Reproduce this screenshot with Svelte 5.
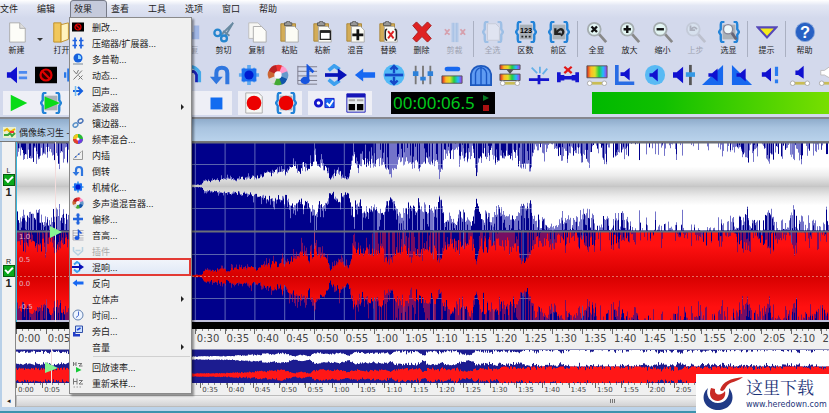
<script lang="ts">
	type Tool = { icon: string; label?: string; disabled?: boolean; arrow?: boolean };

	const menus = ['文件', '编辑', '效果', '查看', '工具', '选项', '窗口', '帮助'];
	let openMenu = $state('效果');
	let channels = $state([
		{ name: 'L', on: true },
		{ name: 'R', on: true }
	]);

	const speaker = '<path d="M2 9h5l7-6v18l-7-6H2z" fill="#1010d0"/>';
	const page = '<path d="M4 2h11l6 6v15H4z" fill="#fdfdf8" stroke="#aaa"/><path d="M15 2v6h6" fill="#ddd" stroke="#aaa"/>';
	const clip = '<path d="M2 3h16v19H2z" fill="#d3ac57" stroke="#a98538"/><path d="M6 5V2h2a2 2 0 0 1 4 0h2v3z" fill="#999" stroke="#555"/>';
	const sheet = '<path d="M7 6h10l4 4v13H7z" fill="#fbfbf4" stroke="#aaa"/>';
	const braces = '<path d="M7 1H5Q3 1 3 4v5l-2 3 2 3v5q0 3 2 3h2M17 1h2q2 0 2 3v5l2 3-2 3v5q0 3-2 3h-2" fill="none" stroke="#2484d8" stroke-width="2.6"/>';
	const greyBox = '<path d="M5 4h14v16H5z" fill="#a9b1b8"/>';
	const lens = '<path d="m14 14 8 9" stroke="#888" stroke-width="3"/><circle cx="9" cy="9" r="7" fill="#e2f5f3" stroke="#a5adb0" stroke-width="2"/>';
	const nodes = '<path d="M4 21h16" stroke="#c9bd55" stroke-width="3"/><circle cx="4" cy="21" r="2.5" fill="#fff" stroke="#aaa"/><circle cx="20" cy="21" r="2.5" fill="#fff" stroke="#aaa"/>';
	const wheel = ['#e33', '#f9c', '#69c', '#15a', '#4a3', '#ddd', '#c63', '#b22']
		.map((c, i) => `<path d="M12 12 8 2q6-3 10 1z" fill="${c}" transform="rotate(${i * 45} 12 12)"/>`)
		.join('');

	const icons: Record<string, string> = {
		page,
		open: '<path d="M3 2h8v21H3z" fill="#f1c75c" stroke="#bd8c24"/><path d="m11 4 8-2v18l-8 3z" fill="#fff3be" stroke="#bd8c24"/>',
		save: '<path d="M2 2h20v20H2z" fill="#3a68c8"/><path d="M6 2h12v8H6z" fill="#fff"/>',
		undo: '<path d="M3 3h18v18H3z" fill="#7898d8"/>',
		redo: '<path d="M6 20V8h5v4h4V5h6v15z" fill="#2c68d8"/>',
		scissors: '<path d="m9 15 13-13-9 15M11 11 18 16" fill="none" stroke="#688aa2" stroke-width="2"/><circle cx="5" cy="13" r="3.5" fill="none" stroke="#2686cf" stroke-width="2.5"/><circle cx="12" cy="19" r="3.2" fill="none" stroke="#2686cf" stroke-width="2.5"/>',
		copy: '<path d="M3 2h10l4 4v13H3z" fill="#f7f7f4" stroke="#bbb"/><path d="M8 6h9l5 5v12H8z" fill="#fcfcf8" stroke="#aaa"/>',
		paste: clip + sheet,
		pasteNew: clip + sheet + '<path d="M9 11h11v9H9z" fill="#fff" stroke="#222" stroke-width="1.5"/><path d="M9 10h11v3H9z" fill="#222"/>',
		mix: clip + sheet + '<path d="M14 9v12M8 15h12" stroke="#111" stroke-width="3"/>',
		replace: clip + sheet + '<path d="m11 11 6 8m0-8-6 8" stroke="#d22" stroke-width="2"/><path d="M10 9q-2 0-2 3v6q0 3 2 3m8-12q2 0 2 3v6q0 3-2 3" fill="none" stroke="#222" stroke-width="1.5"/>',
		remove: '<path d="m2 5 4-4 6 6 6-6 4 4-6 7 6 7-4 4-6-6-6 6-4-4 6-7z" fill="#df2222" stroke="#a51616"/>',
		trim: '<path d="M8 2h8v21H8z" fill="#87b7e6"/><path d="M10 2v21m4-21v21" stroke="#2e7fd0"/><path d="M1 9l5 6m0-6-5 6M18 9l5 6m0-6-5 6" stroke="#d22" stroke-width="2"/>',
		selectAll: braces + '<path d="M6 3h9l4 4v14H6z" fill="#fff" stroke="#aaa"/>',
		number: greyBox + braces + '<text x="12" y="13" font-size="8" font-weight="bold" text-anchor="middle" font-family="Liberation Sans">123</text><path d="M7 17h2m2 0h2m2 0h2" stroke="#222" stroke-width="2"/>',
		previous: greyBox + braces + '<path d="M8 8v6h6M9 13q4-6 7-3 2 3-2 6" fill="none" stroke="#222" stroke-width="2.5"/>',
		zoomAll: lens + '<path d="m6 6 6 6m0-6-6 6" stroke="#111" stroke-width="2.6"/>',
		zoomIn: lens + '<path d="M5 9h8M9 5v8" stroke="#111" stroke-width="2.6"/>',
		zoomOut: lens + '<path d="M5 9h8" stroke="#111" stroke-width="2.6"/>',
		zoomPrevious: lens + '<path d="M6 5v5h5M7 9q3-4 6 0" fill="none" stroke="#555" stroke-width="2"/>',
		zoomSel: greyBox + braces + '<path d="m15 13 5 7" stroke="#667" stroke-width="3"/><circle cx="11" cy="9" r="5" fill="#eef8fa" stroke="#889" stroke-width="1.5"/>',
		tip: '<path d="M2 7h20L12 18z" fill="#f5ec18" stroke="#5548b8" stroke-width="2.3"/>',
		help: '<circle cx="12" cy="12" r="10.5" fill="#2861c4" stroke="#8daadb"/><text x="12" y="18" font-size="18" font-weight="bold" text-anchor="middle" fill="#fff" font-family="Liberation Sans">?</text>',
		match: '<path d="M1 9h4l7-6v18l-7-6H1z" fill="#1010d0"/><path d="M14 9h9m-9 6h9" stroke="#4c8af0" stroke-width="3"/>',
		censor: '<path d="M0 3h24v18H0z"/><circle cx="12" cy="12" r="6" fill="#300" stroke="#e00000" stroke-width="2.4"/><path d="m8 8 8 8" stroke="#e00000" stroke-width="2.4"/>',
		compress: '<path d="M6 1v22M18 1v22M1 7h9m4 0h9M1 17h9m4 0h9" stroke="#1f62e0" stroke-width="3.4"/>',
		doppler: '<circle cx="12" cy="10" r="9" fill="#1560dd"/><path d="M12 4a6 6 0 0 1 6 8h-6z" fill="#8fd6ff"/><path d="M2 22h20" stroke="#789" stroke-width="2"/>',
		dynamics: '<path d="M3 21 20 3M3 3l6 7 4-8M13 13l8 8m0-8-8 8" fill="none" stroke="#777" stroke-width="2"/>',
		echo: '<path d="M2 12h17M12 4l8 8-8 8" fill="none" stroke="#1560df" stroke-width="4"/><path d="M7 2v20" stroke="#71b9ee" stroke-width="3"/>',
		flanger: '<ellipse cx="7" cy="16" rx="5" ry="4" fill="none" stroke="#5b91c8" stroke-width="3" transform="rotate(-35 7 16)"/><ellipse cx="17" cy="8" rx="5" ry="4" fill="none" stroke="#4b74b8" stroke-width="3" transform="rotate(-35 17 8)"/>',
		bands: '<circle cx="12" cy="12" r="10" fill="#28bb35"/><path d="M12 2A10 10 0 0 0 2 12h10z" fill="#f0c620"/><path d="M12 12v10a10 10 0 0 1-10-10z" fill="#e63b31"/><path d="M12 12h10a10 10 0 0 1-10 10z" fill="#713ce0"/><circle cx="12" cy="12" r="3" fill="#fff"/>',
		interpolate: '<path d="M2 21h19V3M3 19 19 5" fill="none" stroke="#999" stroke-width="2"/><path d="M6 14h3v3H6zm6-5h3v3h-3z" fill="#36c"/>',
		invert: '<path d="M8 18V10Q8 4 14 4t6 6v12" fill="none" stroke="#2f76df" stroke-width="4.4"/><path d="M1 14h14l-7 8z" fill="#2f76df"/>',
		mechanize: '<path d="M12 1v22M1 12h22M5 5l14 14m0-14L5 19" stroke="#60a9ef" stroke-width="4"/><path d="M4 5h16v14H4z" fill="#1c70ef"/><circle cx="12" cy="12" r="5" fill="#001bd0"/>',
		wheel: wheel + '<circle cx="12" cy="12" r="4" fill="#f8f8ff"/>',
		offset: '<path d="M12 1v22M2 12h20" stroke="#2365dc" stroke-width="5"/><path d="m7 5 5-4 5 4M7 19l5 4 5-4" fill="#2365dc"/>',
		pitch: '<path d="M2 2v20M2 3h21M2 8h21M2 13h21M2 18h21M2 22h21" stroke="#778" stroke-width="1"/><path d="M13 18V3l6 6" fill="none" stroke="#1755df" stroke-width="3"/><ellipse cx="10" cy="18" rx="5" ry="4" fill="#1755df"/>',
		plugin: '<path d="M3 4v8l9 8 9-8V4M7 11h10" fill="none" stroke="#a9cbe0" stroke-width="3"/>',
		reverb: '<path d="M4 7 10 2l6 4M4 17l6 5 6-4" fill="none" stroke="#3da0ef" stroke-width="4"/><path d="M0 12h20" stroke="#0710b8" stroke-width="4"/><path d="m14 5 10 7-10 7z" fill="#0710b8"/>',
		back: '<path d="m1 12 9-7v4h13v6H10v4z" fill="#1768f2"/>',
		stereo: '<circle cx="12" cy="12" r="11.5" fill="#52baf7"/><path d="M2 12h20" stroke="#1448c8" stroke-width="3"/><path d="M12 2v8m0 4v8M8 6l4-4 4 4M8 18l4 4 4-4" fill="none" stroke="#1448c8" stroke-width="2.6"/>',
		clock: '<circle cx="12" cy="12" r="10" fill="#edf4ff" stroke="#6281b0" stroke-width="2"/><path d="M13 5v8l-5 4" fill="none" stroke="#46c" stroke-width="2"/>',
		voice: '<path d="M7 2h14v13H7z" fill="#cee3ff" stroke="#3250a8" stroke-width="2"/><path d="M2 14h5v4h9v5H2z" fill="#213dc7"/><path d="m10 10 7-4" stroke="#2145d5" stroke-width="3"/>',
		rate: '<path d="M3 2v8m0-4h5m0-4v8M12 5h8l-6 5h7" fill="none" stroke="#777" stroke-width="2"/><path d="m8 12 11 6-11 5z" fill="#12c934"/>',
		resample: '<path d="M3 3v12m0-6h7m0-6v12m4-8h7l-7 7h8" fill="none" stroke="#777" stroke-width="2"/><path d="M3 20h18" stroke="#999" stroke-width="2" stroke-dasharray="3"/>',
		wave: '<path d="M1 9v6m4-10v14M9 2v20m4-16v12m4-15v18m4-13v8" stroke="#2877e8" stroke-width="3"/>',
		arch: '<path d="M3 20V9q9-12 18 0v11" fill="none" stroke="#45a9e9" stroke-width="4"/><path d="M9 12q6-8 9 0v8" fill="none" stroke="#1521b4" stroke-width="3"/>',
		sliders: '<path d="M4 2v20m8-20v20m8-20v20" stroke="#777" stroke-width="2"/><path d="M1 8h6v5H1zm8 6h6v4H9zm8-6h6v5h-6z" fill="#2d80d9"/>',
		equal: '<rect x="4" y="3" width="17" height="5" rx="3" fill="#1768ef"/><path d="M1 13h22v8H1z" fill="url(#spectrum)" stroke="#555"/>',
		gate: '<path d="M1 23V11q2-9 11-9t11 9v12z" fill="#5f9bf2" stroke="#1e59bd" stroke-width="2"/><path d="M6 23V10q1-5 6-6 5 1 6 6v13M12 3v20" fill="none" stroke="#1a57c4" stroke-width="1.5"/>',
		stack: '<path d="M1 1h22v5H1zm0 10h22v7H1z" fill="url(#spectrum)" stroke="#555"/><path d="M8 6h8l-4 5z" fill="#555"/>' + nodes,
		pop: '<path d="M1 17h22M12 12v10" stroke="#1515cd" stroke-width="3"/><path d="m10 10-6-6m9 6V3m3 8 5-6" stroke="#65b0e8" stroke-width="2"/>',
		noise: '<path d="M2 9v11m4-8v6m0-3h12m0-3v6m4-9v11" stroke="#1515d0" stroke-width="4"/><path d="m8 3 8 7m0-7-8 7" stroke="#e01818" stroke-width="2.5"/>',
		spectrum: '<path d="M1 2h22v13H1z" fill="url(#spectrum)" stroke="#555"/>' + nodes,
		volAxis: '<path d="M2 1v20h19" fill="none" stroke="#286ce4" stroke-width="4"/><path d="M6 9h4l6-5v14l-6-5H6z" fill="#1010d0"/>',
		volCircle: '<circle cx="12" cy="12" r="11" fill="#58baf4"/><path d="M6 10h3l6-5v14l-6-5H6z" fill="#1010d0"/>',
		volSlider: '<path d="M0 9h4l7-6v18l-7-6H0z" fill="#1010d0"/><path d="M19 1v22" stroke="#555" stroke-width="3"/><path d="M14 9h10v5H14z" fill="#3398e5"/>',
		fadeIn: '<path d="M0 23 23 1v22z" fill="#1768ef"/><path d="M7 10h4l6-5v14l-6-5H7z" fill="#1010d0"/>',
		fadeOut: '<path d="M1 1v22h22z" fill="#1768ef"/><path d="M6 10h4l6-5v14l-6-5H6z" fill="#1010d0"/>',
		volMax: '<path d="M2 9h4l6-5v15l-6-5H2z" fill="#1010d0"/><path d="M18 3v10m0 4v4" stroke="#287bf0" stroke-width="3.5"/>',
		volShape: '<path d="M7 7h3l6-5v14l-6-4H7z" fill="#1010d0"/>' + nodes,
		volPale: '<path d="M3 7h4l7-5v14l-7-4H3z" fill="#fff" stroke="#bbb"/>' + nodes,
		play: '<path d="M3 3v18l18-9z" fill="#08db18"/>',
		playSel: greyBox + braces + '<path d="M5 5v14l17-7z" fill="#08db18"/>',
		stop: '<path d="M6 6h13v13H6z" fill="#126cf0"/>',
		record: '<path d="M3 1h14l4 4v18H3z" fill="#f7f7f4" stroke="#aaa"/><circle cx="12" cy="12" r="8" fill="#ec0000"/>',
		recordSel: greyBox + braces + '<circle cx="12" cy="12" r="8" fill="#ec0000"/>',
		options: '<circle cx="6" cy="12" r="3.5" fill="#fff" stroke="#1616cc" stroke-width="3"/><path d="M13 7h10v10H13z" fill="#1768ef" stroke="#1616cc"/><path d="m15 12 3 3 4-6" fill="none" stroke="#fff" stroke-width="2"/>',
		panel: '<path d="M2 2h20v20H2z" fill="#e8edf0" stroke="#1616b8"/><path d="M2 2h20v4H2z" fill="#1616b8"/><path d="M4 13h7v7H4zm9 0h7v7h-7z"/><path d="M4 9h7m2 0h7" stroke="#aaa" stroke-width="2"/>'
	};

	const effects: (Tool | null)[] = [
		{ icon: 'censor', label: '删改...' },
		{ icon: 'compress', label: '压缩器/扩展器...' },
		{ icon: 'doppler', label: '多普勒...' },
		{ icon: 'dynamics', label: '动态...' },
		{ icon: 'echo', label: '回声...' },
		{ icon: '', label: '滤波器', arrow: true },
		{ icon: 'flanger', label: '镶边器...' },
		{ icon: 'bands', label: '频率混合...' },
		{ icon: 'interpolate', label: '内插' },
		{ icon: 'invert', label: '倒转' },
		{ icon: 'mechanize', label: '机械化...' },
		{ icon: 'wheel', label: '多声道混音器...' },
		{ icon: 'offset', label: '偏移...' },
		{ icon: 'pitch', label: '音高...' },
		{ icon: 'plugin', label: '插件', disabled: true },
		{ icon: 'reverb', label: '混响...' },
		{ icon: 'back', label: '反向' },
		{ icon: '', label: '立体声', arrow: true },
		{ icon: 'clock', label: '时间...' },
		{ icon: 'voice', label: '旁白...' },
		{ icon: '', label: '音量', arrow: true },
		null,
		{ icon: 'rate', label: '回放速率...' },
		{ icon: 'resample', label: '重新采样...' }
	];

	const fileTools: Tool[] = [
		{ icon: 'open', label: '打开' },
		{ icon: 'save', label: '保存' }
	];
	const editTools: Tool[][] = [
		[
			{ icon: 'undo', label: '撤消' },
			{ icon: 'redo', label: '重复', disabled: true },
			{ icon: 'scissors', label: '剪切' },
			{ icon: 'copy', label: '复制' },
			{ icon: 'paste', label: '粘贴' },
			{ icon: 'pasteNew', label: '粘新' },
			{ icon: 'mix', label: '混音' },
			{ icon: 'replace', label: '替换' },
			{ icon: 'remove', label: '删除' },
			{ icon: 'trim', label: '剪裁', disabled: true }
		],
		[
			{ icon: 'selectAll', label: '全选', disabled: true },
			{ icon: 'number', label: '区数' },
			{ icon: 'previous', label: '前区' }
		],
		[
			{ icon: 'zoomAll', label: '全显' },
			{ icon: 'zoomIn', label: '放大' },
			{ icon: 'zoomOut', label: '缩小' },
			{ icon: 'zoomPrevious', label: '上步', disabled: true },
			{ icon: 'zoomSel', label: '选显' }
		],
		[{ icon: 'tip', label: '提示' }],
		[{ icon: 'help', label: '帮助' }]
	];
	const effectTools = [
		'match', 'censor', 'wave', 'doppler', 'dynamics', 'echo', 'arch', 'invert', 'mechanize', 'wheel',
		'pitch', 'reverb', 'back', 'stereo', 'sliders', 'equal', 'gate', 'stack', 'pop', 'noise',
		'spectrum', 'volAxis', 'volCircle', 'volSlider', 'fadeIn', 'fadeOut', 'volMax', 'volShape', 'volPale'
	];

	// [position, level] pairs, linearly interpolated
	const envelope = [
		[0, 0.85], [54, 0.9], [80, 0.4], [130, 0.02], [185, 0.02], [188, 0.13], [220, 0.19], [240, 0.23],
		[262, 0.38], [285, 0.56], [292, 0.5], [299, 0.7], [310, 0.42], [314, 0.16], [322, 0.42], [332, 0.18],
		[337, 0.72], [358, 0.6], [365, 0.7], [375, 0.4], [384, 0.75], [400, 0.6], [420, 0.7], [423, 0.35],
		[428, 0.85], [456, 0.92], [460, 0.35], [465, 0.85], [500, 0.95], [504, 0.5], [514, 0.5], [518, 0.95],
		[545, 1], [560, 1.05], [570, 0.85], [580, 1.15], [608, 1.05], [630, 1.2], [660, 1.25], [700, 1.3], [722, 1.05],
		[731, 0.75], [735, 1.1], [746, 1.1], [752, 0.75], [757, 1.1], [773, 1.1], [776, 0.85], [780, 1.15], [813, 1.1], [960, 1.3]
	];

	function level(x: number) {
		const i = Math.max(1, envelope.findIndex((p) => p[0] >= x));
		const [x0, y0] = envelope[i - 1];
		const [x1, y1] = envelope[i];
		return y0 + ((y1 - y0) * (x - x0)) / (x1 - x0);
	}

	function trace(mid: number, half: number, seed: number, scale: number) {
		let s = seed;
		const rnd = () => (s = (s * 16807) % 2147483647) / 2147483647;
		let body = '';
		let peaks = '';
		let sway = 0.5;
		for (let x = 0; x < 813; x++) {
			const env = level(x * scale);
			const dense = x * scale > 358 || x < 54;
			// the level drifts over a few columns, each side adds its own jitter
			if (rnd() > 0.45) sway = rnd();
			const side = () => {
				const b = Math.min(1, env * (1 - 0.32 * sway * sway - 0.3 * rnd() ** 2));
				const p = Math.min(1, dense && rnd() > 0.6 ? 1 : b * (1 + rnd() ** 2 * 0.7));
				return [b * half, p * half];
			};
			const [up, upPeak] = side();
			const [down, downPeak] = side();
			body += `M${x + 0.5} ${(mid - up - 0.5).toFixed(1)}V${(mid + down + 0.5).toFixed(1)}`;
			peaks += `M${x + 0.5} ${(mid - upPeak).toFixed(1)}V${(mid + downPeak).toFixed(1)}`;
		}
		return { body, peaks };
	}

	const left = trace(44, 44, 4211, 1);
	const right = trace(134, 44, 9173, 1);
	const leftSmall = trace(9, 8, 771, 1.132);
	const rightSmall = trace(26, 8, 3301, 1.132);

	const stamp = (i: number) => `${Math.floor(i / 12)}:${String((i % 12) * 5).padStart(2, '0')}`;
	const marks = Array.from({ length: 28 }, (_, i) => stamp(i));
	const smallMarks = Array.from({ length: 26 }, (_, i) => stamp(i));
</script>

{#snippet glyph(name: string)}
	<svg class="glyph" viewBox="0 0 24 24" aria-hidden="true">{@html icons[name] ?? ''}</svg>
{/snippet}

{#snippet tool(t: Tool)}
	<button class="tool" disabled={t.disabled}>
		{@render glyph(t.icon)}
		<span>{t.label}</span>
	</button>
{/snippet}

<div class="app">
	<nav class="menubar">
		{#each menus as m}
			<button class:active={openMenu === m} onclick={() => (openMenu = m)}>{m}</button>
		{/each}
	</nav>

	<div class="toolbar main-tools">
		{@render tool({ icon: 'page', label: '新建' })}
		<button class="drop" aria-label="新建选项"></button>
		{#each fileTools as t}
			{@render tool(t)}
		{/each}
		{#each editTools as group}
			<div class="group">
				{#each group as t}
					{@render tool(t)}
				{/each}
			</div>
		{/each}
	</div>

	<div class="toolbar effect-tools">
		{#each effectTools as name}
			<button class="small-tool" aria-label={name}>{@render glyph(name)}</button>
		{/each}
	</div>

	<div class="toolbar controls">
		<div class="panel transport">
			<button aria-label="play">{@render glyph('play')}</button>
			<button aria-label="play selection">{@render glyph('playSel')}</button>
			<button class="last" aria-label="stop">{@render glyph('stop')}</button>
		</div>
		<div class="panel">
			<button aria-label="record">{@render glyph('record')}</button>
			<button aria-label="record selection">{@render glyph('recordSel')}</button>
		</div>
		<div class="panel">
			<button aria-label="control options">{@render glyph('options')}</button>
			<button aria-label="visuals">{@render glyph('panel')}</button>
		</div>
		<div class="timer">
			<span>00:00:06.5</span>
			<svg viewBox="0 0 8 18" aria-hidden="true"><path d="M1 1v6l6-3z" fill="#087b22" /><path d="M1 11h6v6H1z" fill="#a11" /></svg>
		</div>
		<div class="meter"></div>
	</div>

	<header class="title">
		<svg viewBox="0 0 13 11" aria-hidden="true">
			<path d="M0 0h13v11H0z" fill="#e9efcf" /><path d="m1 4 3-2 3 3 5-3" fill="none" stroke="#e9b800" stroke-width="2" /><path d="M1 8h4l2-2 2 3 3-3" fill="none" stroke="#3aa63c" stroke-width="2" /><path d="M7 5h4" stroke="#e33" stroke-width="2" />
		</svg>
		偶像练习生 -
	</header>

	<main class="editor">
		<aside class="gutter">
			{#each channels as c, i}
				<div class="channel">
					<label for="channel-{i}">{c.name}</label>
					<input id="channel-{i}" type="checkbox" bind:checked={c.on} />
					<b>1</b>
				</div>
			{/each}
			<button class="scroll-left" aria-label="scroll left">◂</button>
		</aside>

		<div class="tracks">
			<div class="wave-box">
				<svg class="wave" viewBox="0 0 813 180" preserveAspectRatio="none" aria-hidden="true">
					<defs>
						<linearGradient id="spectrum">
							<stop offset="0" stop-color="#d22" /><stop offset=".2" stop-color="#fb2" /><stop offset=".4" stop-color="#dfdf28" /><stop offset=".6" stop-color="#2c4" /><stop offset=".8" stop-color="#2bf" /><stop offset="1" stop-color="#a3e" />
						</linearGradient>
						<linearGradient id="white" gradientUnits="userSpaceOnUse" x1="0" x2="0" y1="0" y2="88">
							<stop offset=".28" stop-color="#fff" /><stop offset=".38" stop-color="#ececec" /><stop offset=".5" stop-color="#c8c8c8" /><stop offset=".62" stop-color="#ececec" /><stop offset=".72" stop-color="#fff" />
						</linearGradient>
						<linearGradient id="red" gradientUnits="userSpaceOnUse" x1="0" x2="0" y1="90" y2="178">
							<stop offset=".15" stop-color="#ff1010" /><stop offset=".5" stop-color="#d60000" /><stop offset=".85" stop-color="#ff1010" />
						</linearGradient>
						<pattern id="grid" width="29.8" height="180" patternUnits="userSpaceOnUse">
							<path d="M.5 0v180" stroke="#8e99cf" stroke-opacity=".65" />
						</pattern>
					</defs>
					<rect width="813" height="180" fill="#00008b" />
					<rect width="813" height="180" fill="url(#grid)" />
					<path d="M0 22.5h813M0 66.5h813M0 112.5h813M0 156.5h813" stroke="#5963ac" />
					<path d={left.peaks} stroke="#bfc0f4" stroke-opacity=".6" />
					<path d={left.body} stroke="url(#white)" />
					<path d={right.peaks} stroke="#ee1c3b" stroke-opacity=".5" />
					<path d={right.body} stroke="url(#red)" />
					<path d="M0 44.5h813" stroke="#c6c6c6" />
					<path d="M0 134.5h813" stroke="#e66c60" stroke-dasharray="2 2" />
					<path d="M0 .5h813M0 89.5h813" stroke="#6b6f78" stroke-width="2" />
					<path d="M0 179h813" stroke="#c2c2dc" stroke-width="2" />
					<path d="M.5 0v180" stroke="#35b6dc" />
					<path d="M39.5 0v180" stroke="#f2dcdc" />
					<path d="M34 84v12l12-6z" fill="#86f592" />
				</svg>
				<div class="levels"><span>1.0</span><span>0.5</span><span>0.0</span><span>-0.5</span></div>
			</div>
			<div class="black"></div>
			<div class="ruler">
				{#each marks as m}
					<span>{m}</span>
				{/each}
			</div>
			<svg class="overview" viewBox="0 0 813 34" preserveAspectRatio="none" aria-hidden="true">
				<rect width="813" height="34" fill="#1c1c90" />
				<path d={leftSmall.body} stroke="#fff" />
				<path d={rightSmall.body} stroke="#ff1717" />
				<path d="M0 .5h813" stroke="#8b8fb8" />
				<path d="M35.5 0v34" stroke="#f2dcdc" />
				<path d="M29 13v11l13-5z" fill="#86f592" />
			</svg>
			<div class="ruler small">
				{#each smallMarks as m}
					<span>{m}</span>
				{/each}
			</div>
			<div class="scrollbar"><i></i></div>
		</div>
	</main>
	<footer></footer>

	{#if openMenu === '效果'}
		<div class="menu" role="menu">
			{#each effects as e}
				{#if e}
					<button class="item" class:hot={e.label === '混响...'} role="menuitem" disabled={e.disabled}>
						{@render glyph(e.icon)}
						<span>{e.label}</span>
						{#if e.arrow}<i class="more"></i>{/if}
					</button>
				{:else}
					<hr />
				{/if}
			{/each}
		</div>
	{/if}

	<div class="badge">
		<svg viewBox="0 0 50 40" aria-hidden="true">
			<path d="M12 14C4 21 7 34 20 36c15 1 21-12 13-22 1 9-4 15-11 15-8 0-13-8-10-15z" fill="#203a86" />
			<path d="M15 14c-3 8 1 13 7 13 6-1 8-5 7-10-3 5-11 5-10-2z" fill="#c82a24" />
			<path d="M24 16C27 7 34 5 47 3 42 8 34 7 30 13c-2 4-4 5-6 3z" fill="#c82a24" />
		</svg>
		<div>
			<strong>这里下载</strong>
			<a href="http://www.heredown.com">www.heredown.com</a>
		</div>
	</div>
</div>

<style>
	:global(body) {
		overflow: hidden;
	}

	.app {
		position: relative;
		font-family: "Liberation Sans", "Noto Sans CJK SC", sans-serif;
		font-size: 9px;
		color: #222;
		background: #d3d9ec;
		overflow: hidden;
	}

	button {
		padding: 0;
		border: none;
		background: none;
		font: inherit;
		color: inherit;
	}

	.glyph {
		display: block;
		flex: none;
		width: 22px;
		height: 22px;
	}

	.menubar {
		display: flex;
		height: 18px;
		margin-left: -4px;
		background: linear-gradient(#fff, #e3e7f4 30%, #d3d9ec);
	}

	.menubar button {
		width: 37px;
		padding-left: 3px;
		border: 1px solid transparent;
		text-align: left;
		line-height: 16px;
	}

	.menubar button.active {
		border-color: #777b88;
		border-radius: 3px 3px 0 0;
		background: #c5cadb;
	}

	.toolbar {
		display: flex;
		align-items: center;
	}

	.main-tools {
		height: 42px;
	}

	.tool {
		display: flex;
		flex-direction: column;
		align-items: center;
		gap: 2px;
		flex: none;
		width: 33px;
		font-size: 8px;
		line-height: 12px;
	}

	.tool:disabled {
		opacity: 0.3;
	}

	.drop {
		width: 12px;
		height: 20px;
	}

	.drop::before {
		content: '';
		display: block;
		width: 0;
		margin-left: 4px;
		border: 3px solid transparent;
		border-top-color: #333;
		border-bottom: 0;
	}

	.group {
		display: flex;
	}

	.group:nth-of-type(1) {
		margin-left: 30px;
	}

	.group + .group {
		margin-left: 2px;
		padding-left: 2px;
		border-left: 1px solid #aab0c2;
	}

	.effect-tools {
		height: 29px;
		padding-left: 2px;
	}

	.small-tool {
		display: flex;
		justify-content: center;
		flex: none;
		width: 29px;
	}

	.controls {
		height: 28px;
		border-bottom: 2px solid #85878e;
	}

	.panel {
		display: flex;
		align-items: center;
		height: 24px;
		margin-right: 6px;
		background: #eeeff6;
	}

	.panel button {
		display: flex;
		justify-content: center;
		width: 32px;
	}

	.transport {
		width: 229px;
		margin-left: 3px;
	}

	.panel .last {
		margin-left: auto;
	}

	.timer {
		display: flex;
		align-items: center;
		justify-content: space-between;
		height: 22px;
		width: 104px;
		margin-left: 13px;
		padding: 0 5px 0 2px;
		box-sizing: border-box;
		background: #000;
		color: #00c81c;
		font: 17px/22px "Noto Sans", sans-serif;
	}

	.timer svg {
		width: 8px;
		height: 18px;
	}

	.meter {
		flex: 1;
		height: 22px;
		margin-left: 97px;
		background: linear-gradient(90deg, #00b900, #10c000 30%, #78df00);
	}

	.title {
		display: flex;
		align-items: center;
		gap: 3px;
		height: 17px;
		padding: 5px 0 0 3px;
		background: linear-gradient(#8faccb, #a9c4e0 40%, #b9d2eb);
	}

	.title svg {
		width: 13px;
		height: 11px;
	}

	.editor {
		display: flex;
		border-top: 1px solid #777;
	}

	.gutter {
		display: flex;
		flex-direction: column;
		flex: none;
		width: 13px;
		border-left: 2px solid #b8d0e8;
		border-right: 1px solid #888;
		background: #f2f2f2;
	}

	.channel {
		display: flex;
		flex-direction: column;
		align-items: center;
		height: 65px;
		padding-top: 26px;
	}

	.channel label {
		font-size: 7px;
		line-height: 6px;
	}

	.channel input {
		appearance: none;
		width: 12px;
		height: 12px;
		margin: 0;
		border: 1px solid #075c10;
		background: #0aa81b;
	}

	.channel input:checked::after {
		content: '';
		display: block;
		width: 6px;
		height: 3px;
		margin: 1px;
		border: solid #fff;
		border-width: 0 0 2px 2px;
		transform: rotate(-45deg);
	}

	.channel b {
		font-size: 11px;
		line-height: 13px;
	}

	.scroll-left {
		height: 12px;
		margin-top: auto;
		line-height: 10px;
		font-size: 7px;
	}

	.tracks {
		flex: 1;
		min-width: 0;
	}

	.wave-box {
		display: grid;
	}

	.wave,
	.levels {
		grid-area: 1 / 1;
	}

	.wave {
		display: block;
		width: 100%;
		height: 180px;
	}

	.levels {
		display: flex;
		flex-direction: column;
		justify-content: space-between;
		padding: 90px 0 10px 3px;
		color: #e5b3c4;
		font: 7px/10px "DejaVu Sans", sans-serif;
	}

	.black {
		height: 7px;
		background: #000;
	}

	.ruler {
		--steps: 27.28;
		display: flex;
		height: 20px;
		overflow: hidden;
		background: repeating-linear-gradient(90deg, #888 0 1px, transparent 1px 6px) 0 0 / 100% 2px no-repeat, #f0f0f0;
		font: 10px/19px "DejaVu Sans", sans-serif;
		color: #444;
	}

	.ruler span {
		flex: 0 0 calc(100% / var(--steps));
		padding-left: 1px;
		border-left: 1px solid #666;
		box-sizing: border-box;
		height: 5px;
		white-space: nowrap;
	}

	.overview {
		display: block;
		width: 100%;
		height: 34px;
	}

	.ruler.small {
		--steps: 30.88;
		height: 12px;
		font-size: 7px;
		line-height: 15px;
	}

	.scrollbar {
		display: flex;
		justify-content: center;
		align-items: center;
		height: 10px;
		padding-left: 380px;
		border: 1px solid #bbb;
		background: linear-gradient(#f2f2f2, #d2d2d4);
	}

	.scrollbar i {
		width: 5px;
		height: 4px;
		background: repeating-linear-gradient(90deg, #777 0 1px, transparent 1px 2px);
	}

	footer {
		height: 4px;
		background: #bcd3ea;
		border-bottom: 2px solid #3d93ad;
	}

	.menu {
		position: absolute;
		top: 17px;
		left: 69px;
		width: 123px;
		padding: 1px 1px 2px;
		box-sizing: border-box;
		border: 1px solid #8a8a8a;
		background: #f0f0f0;
		box-shadow: 2px 2px 2px #0006;
	}

	.item {
		display: flex;
		align-items: center;
		gap: 8px;
		width: 100%;
		height: 16px;
		padding: 0 6px 0 1px;
		text-align: left;
		white-space: nowrap;
	}

	.item .glyph {
		width: 12px;
		height: 12px;
	}

	.item:disabled {
		color: #999;
		opacity: 0.8;
	}

	.item.hot {
		outline: 2px solid #e33a34;
		outline-offset: -1px;
		background: linear-gradient(#f2f5fb, #dfe8f6);
	}

	.more {
		margin-left: auto;
		border: 3px solid transparent;
		border-left-color: #222;
		border-right: 0;
	}

	hr {
		height: 1px;
		margin: 1px 0 2px 22px;
		border: 0;
		background: #d0d0d0;
	}

	.badge {
		position: absolute;
		right: 0;
		bottom: 0;
		display: flex;
		width: 133px;
		height: 39px;
		background: #fff;
		color: #1d3478;
	}

	.badge svg {
		width: 50px;
		height: 40px;
	}

	.badge strong,
	.badge a {
		display: block;
	}

	.badge strong {
		font: 17px/25px "Noto Serif CJK SC", "Noto Sans CJK SC", serif;
	}

	.badge a {
		font: 8px/12px "DejaVu Sans", sans-serif;
		color: inherit;
		text-decoration: none;
	}
</style>
